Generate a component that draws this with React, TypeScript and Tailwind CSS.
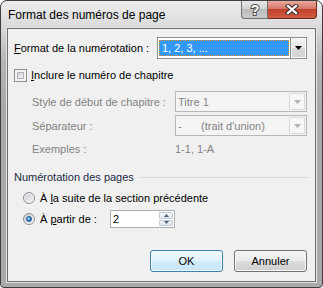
import React from "react";

const font = "font-['Liberation_Sans',Arial,sans-serif]";

function Arrow({ color }: { color: string }) {
  return (
    <svg width="7" height="4" viewBox="0 0 7 4">
      <path d="M0 0h7L3.5 4z" fill={color} />
    </svg>
  );
}

function DisabledSelect({ children }: { children: React.ReactNode }) {
  return (
    <div className="w-[132px] h-[21px] flex border border-[#b4b8bb] bg-[#f4f4f4]">
      <div className="flex-1 flex items-center pl-[2px] text-[#838383]">{children}</div>
      <div className="w-[16px] m-[1px] flex items-center justify-center border border-[#dadada] bg-[#f6f6f6]">
        <Arrow color="#b3b3b3" />
      </div>
    </div>
  );
}

export default function App() {
  return (
    <div className={`w-[323px] h-[288px] bg-white ${font} text-[11px] leading-[16px] text-black`}>
      <div className="w-[323px] h-[288px] flex flex-col border border-[#3e3e3e] rounded-t-[7px] rounded-b-[4px] overflow-hidden bg-[linear-gradient(to_bottom,#ededed_0px,#dadada_26px,#b5b5b5_60px,#aaaaaa_100px)]">
        {/* title bar */}
        <div className="h-[27px] flex justify-between items-start">
          <span className="pl-[7px] pt-[7px] text-[12px] leading-[14px] text-black">
            Format des numéros de page
          </span>
          <div className="flex pr-[5px]">
            <div className="w-[27px] h-[18px] flex items-center justify-center border border-[#6f6f6f] border-t-0 rounded-bl-[4px] bg-[linear-gradient(to_bottom,#e8e8e8_0%,#d4d4d4_45%,#bbbbbb_50%,#cbcbcb_100%)]">
              <svg width="12" height="15" viewBox="0 0 12 15">
                <text x="6" y="12.5" textAnchor="middle" fontFamily="Liberation Sans, Arial, sans-serif" fontWeight="bold" fontSize="14" fill="#fff" stroke="#505050" strokeWidth="2" paintOrder="stroke">?</text>
              </svg>
            </div>
            <div className="w-[49px] h-[18px] flex items-center justify-center border border-[#6b2a1e] border-t-0 border-l-0 rounded-br-[4px] bg-[linear-gradient(to_bottom,#eaab9e_0%,#d5786a_45%,#c2412e_50%,#d05b42_100%)]">
              <svg width="14" height="11" viewBox="0 0 14 11">
                <path d="M3 2l8 7M11 2l-8 7" stroke="#4a3a38" strokeWidth="4.4" strokeLinecap="square" />
                <path d="M3 2l8 7M11 2l-8 7" stroke="#fff" strokeWidth="2.2" strokeLinecap="square" />
              </svg>
            </div>
          </div>
        </div>

        {/* client area */}
        <div className="ml-[6px] w-[309px] h-[254px] flex flex-col border border-[#6e6e6e] bg-[#f0f0f0] shadow-[0_0_0_1px_#e4e4e4]">
          {/* format row */}
          <div className="mt-[8px] h-[22px] flex items-center pl-[6px]">
            <span className="w-[143px]">
              <span className="underline">F</span>ormat de la numérotation :
            </span>
            <div className="w-[150px] h-[22px] flex border border-[#8e8f8f] bg-white">
              <div className="flex-1 ml-[1px] mr-[1px] my-[2px] flex items-center pl-[2px] bg-[#3399ff] text-white border border-dotted border-[#d9893a]">
                1, 2, 3, ...
              </div>
              <div className="w-[16px] flex items-center justify-center border-l border-[#8e8f8f] bg-[linear-gradient(to_bottom,#f4f4f4_0%,#e6e6e6_50%,#dadada_51%,#d2d2d2_100%)] shadow-[inset_0_0_0_1px_#fafafa]">
                <Arrow color="#000" />
              </div>
            </div>
          </div>

          {/* checkbox row */}
          <div className="mt-[8px] h-[16px] flex items-center pl-[6px] gap-[4px]">
            <div className="w-[13px] h-[13px] border border-[#8e8f8f] bg-[#f4f4f4] p-[2px]">
              <div className="w-full h-full border border-[#b2b6bb] bg-[linear-gradient(135deg,#c9cdd3_0%,#e6e7e9_60%,#f6f6f6_100%)]" />
            </div>
            <span>
              <span className="underline">I</span>nclure le numéro de chapitre
            </span>
          </div>

          {/* chapter style */}
          <div className="mt-[8px] h-[21px] flex items-center pl-[24px]">
            <span className="w-[143px] text-[#838383]">Style de début de chapitre :</span>
            <DisabledSelect>Titre 1</DisabledSelect>
          </div>

          {/* separator */}
          <div className="mt-[3px] h-[21px] flex items-center pl-[24px]">
            <span className="w-[143px] text-[#838383]">Séparateur :</span>
            <DisabledSelect>
              <span className="w-[23px]">-</span>
              <span>(trait d'union)</span>
            </DisabledSelect>
          </div>

          {/* examples */}
          <div className="mt-[5px] h-[16px] flex items-center pl-[24px] text-[#838383]">
            <span className="w-[143px]">Exemples :</span>
            <span>1-1, 1-A</span>
          </div>

          {/* group header */}
          <div className="mt-[12px] h-[16px] flex items-center gap-[5px] pl-[6px] pr-[6px]">
            <span className="text-[#1b2a45]">Numérotation des pages</span>
            <div className="flex-1 h-px bg-[#d5dfe5]" />
          </div>

          {/* radio 1 */}
          <div className="mt-[5px] h-[16px] flex items-center pl-[15px] gap-[5px]">
            <div className="w-[12px] h-[12px] rounded-full border border-[#8e8f8f] bg-[linear-gradient(135deg,#c6cad0_0%,#e4e5e7_55%,#fafafa_100%)] shadow-[inset_0_0_0_1px_#f4f4f4]" />
            <span>
              À <span className="underline">l</span>a suite de la section précédente
            </span>
          </div>

          {/* radio 2 */}
          <div className="mt-[3px] h-[20px] flex items-center pl-[15px] gap-[5px]">
            <div className="w-[12px] h-[12px] rounded-full border border-[#8e8f8f] bg-[linear-gradient(135deg,#c6cad0_0%,#e4e5e7_55%,#fafafa_100%)] flex items-center justify-center">
              <div className="w-[6px] h-[6px] rounded-full border border-[#1a4f92] bg-[radial-gradient(circle_at_35%_35%,#b5e8ff_0%,#3b9be0_45%,#1257b0_100%)]" />
            </div>
            <span className="w-[65px]">
              À <span className="underline">p</span>artir de :
            </span>
            <div className="w-[65px] h-[18px] flex border border-[#abadb3] bg-white">
              <div className="flex-1 flex items-center pl-[2px]">2</div>
              <div className="w-[16px] flex flex-col p-[1px] gap-[1px]">
                <div className="flex-1 flex items-center justify-center border border-[#c3cbd6] rounded-[1px] bg-[linear-gradient(to_bottom,#f6f8fa,#e2e7ed)]">
                  <svg width="5" height="3" viewBox="0 0 5 3"><path d="M0 3h5L2.5 0z" fill="#4c607c" /></svg>
                </div>
                <div className="flex-1 flex items-center justify-center border border-[#c3cbd6] rounded-[1px] bg-[linear-gradient(to_bottom,#f0f3f6,#dfe5ec)]">
                  <svg width="5" height="3" viewBox="0 0 5 3"><path d="M0 0h5L2.5 3z" fill="#4c607c" /></svg>
                </div>
              </div>
            </div>
          </div>

          {/* buttons */}
          <div className="mt-[21px] flex justify-end gap-[11px] pr-[8px]">
            <button className="w-[73px] h-[22px] rounded-[3px] border border-[#3c7fb1] bg-[linear-gradient(to_bottom,#eff8fd_0%,#e2f2fc_50%,#d1ebfb_51%,#c6e6f9_100%)] shadow-[inset_0_0_0_1px_#f4fbff]">
              OK
            </button>
            <button className="w-[73px] h-[22px] rounded-[3px] border border-[#707070] bg-[linear-gradient(to_bottom,#f2f2f2_0%,#ebebeb_50%,#dddddd_51%,#cfcfcf_100%)] shadow-[inset_0_0_0_1px_#fbfbfb]">
              Annuler
            </button>
          </div>
        </div>
      </div>
    </div>
  );
}
